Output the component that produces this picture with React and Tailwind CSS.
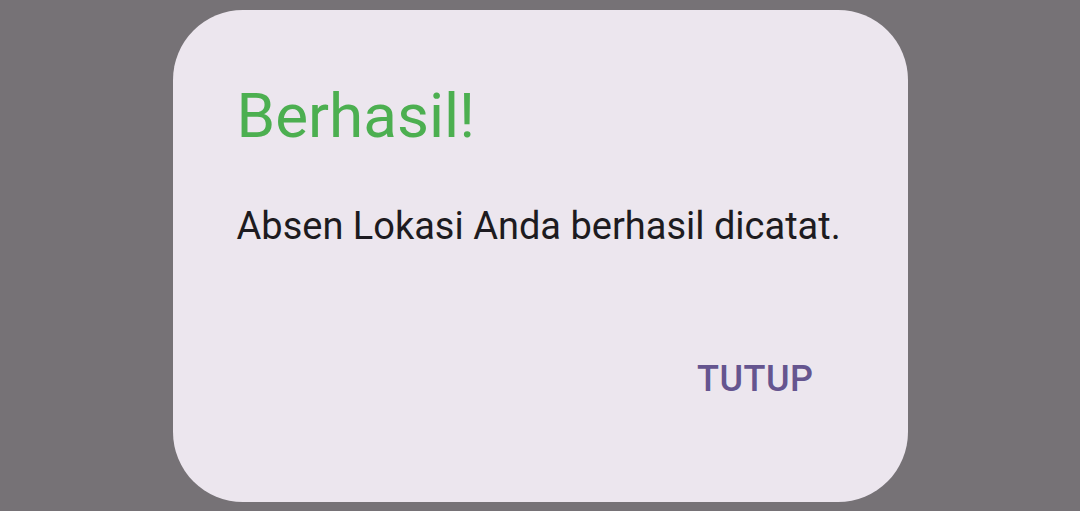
export default function App() {
  return (
    <div className="w-[1080px] h-[511px] bg-[#767276] flex justify-center items-start pt-[10px]" style={{ fontFamily: 'Roboto, "Liberation Sans", sans-serif' }}>
      <div className="w-[735px] h-[492px] bg-[#ECE6EE] rounded-[70px] flex flex-col pl-[64px] pr-[60px] pt-[60px] pb-[60px]">
        <div className="text-[#4CAF50] text-[62px] leading-[80px] mt-[6px]">Berhasil!</div>
        <div className="text-[#1D1B20] text-[38px] leading-[60px] mt-[40px] whitespace-nowrap">Absen Lokasi Anda berhasil dicatat.</div>
        <div className="flex-1" />
        <div className="flex justify-end">
          <button className="text-[#65558F] text-[36px] font-medium leading-[50px] tracking-[0.5px] px-[30px] mr-[4px] mb-[38px]">TUTUP</button>
        </div>
      </div>
    </div>
  );
}
